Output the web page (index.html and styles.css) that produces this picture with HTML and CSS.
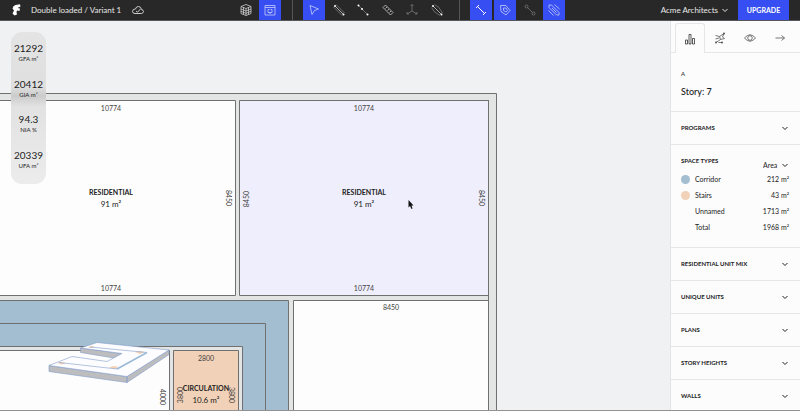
FILE: index.html
```html
<!DOCTYPE html>
<html lang="en">
<head>
<meta charset="utf-8">
<meta name="viewport" content="width=device-width, initial-scale=1">
<title>Double loaded / Variant 1</title>
<link rel="stylesheet" href="styles.css">
</head>
<body>
<svg class="defs" aria-hidden="true">
  <symbol id="chevron" viewBox="0 0 8 8"><path d="M1.500 3L4 5.500 6.500 3" fill="none" stroke="currentColor"/></symbol>
</svg>
<header class="topbar">
  <div class="brand">
    <svg class="logo" viewBox="0 0 9 12" aria-hidden="true"><path d="M.5 4.500Q1 1.500 3.500 1L8 .3 8.500 2.500 5.500 4 8 4.500 7.500 7 5 6.500 4.500 8 5 10.500 2.500 11.500 .5 9.500 2 6.500Z" fill="#fff"/></svg>
    <span>Double loaded / Variant 1</span>
    <svg class="cloud" viewBox="0 0 14 12" fill="none" stroke="#ccc" aria-hidden="true"><path d="M4 9.500H10.500Q12.500 9 12.500 7.500T10.500 5.500Q10 2.500 7.500 2.500T4.500 5Q1.500 5 1.500 7.300T4 9.500M5 7L6.500 8.200 9.500 5"/></svg>
  </div>
  <nav class="toolbar" aria-label="Tools">
    <div class="tools tools-view">
      <button class="tool" aria-label="3D view"><svg viewBox="0 0 14 14"><path d="M7 1.500L12 3.500 7 5.500 2 3.500ZM2 3.500V10.500L7 12.500 12 10.500V3.500M7 5.500V12.500M2 6L7 8 12 6M2 8.300L7 10.300 12 8.300M4.500 4.500V11.500M9.500 4.500V11.500"/></svg></button>
      <button class="tool active" aria-label="Plan view"><svg viewBox="0 0 14 14"><path d="M2 2.500H12V12H2ZM2 4.500H12M5 6.500V9.500H9V6.500M5 6.500H6.500M7.500 6.500H9M7 9.500V11"/></svg></button>
    </div>
    <span class="rule"></span>
    <div class="tools tools-draw">
      <button class="tool active" aria-label="Select"><svg viewBox="0 0 14 14"><path d="M3 2.500L11.500 6 7.500 7.500 5 11.500Z"/></svg></button>
      <button class="tool" aria-label="Wall"><svg viewBox="0 0 14 14"><path class="faint" d="M4 1.500L12.500 10M1.500 4L10 12.500"/><path d="M3 3L11 11"/><path class="dots" d="M3 3h0M11.500 11.500h0"/></svg></button>
      <button class="tool" aria-label="Line"><svg viewBox="0 0 14 14"><path class="faint" d="M2.500 2.500L11.500 11.500"/><path class="dots" d="M2.500 2.500h0M6 6h0M11.500 11.500h0"/></svg></button>
      <button class="tool" aria-label="Measure"><svg viewBox="0 0 14 14"><path d="M4.500 2L12 9.500 9.500 12 2 4.500ZM4.500 5.500L6 4M6.500 7.500L8 6M8.500 9.500L10 8"/></svg></button>
      <button class="tool dim" aria-label="Axes"><svg viewBox="0 0 14 14"><path d="M7 1.500V8L2 11M7 8L12 11M5.500 3L7 1.500 8.500 3M2 9V11H4M12 9V11H10"/></svg></button>
      <button class="tool" aria-label="Split"><svg viewBox="0 0 14 14"><path class="faint" d="M4.500 1.500Q9 3 12.500 10M1.500 4.500Q3 9 10 12.500"/><path d="M3 3L11 11"/><path class="dots" d="M3 3h0M11.500 11.500h0"/></svg></button>
    </div>
    <span class="rule"></span>
    <div class="tools tools-show">
      <button class="tool active" aria-label="Dimensions"><svg viewBox="0 0 14 14"><path class="strong" d="M3.500 3.500L10.500 10.500M2 5L5 2M9 12L12 9"/></svg></button>
      <button class="tool active" aria-label="Labels"><svg viewBox="0 0 14 14"><path d="M2.500 2.500H8L12 7.500 8 12 3 8.500ZM5.500 5H8L9.500 7.500 8 9 5.500 7.500Z"/></svg></button>
      <button class="tool dim" aria-label="Nodes"><svg viewBox="0 0 14 14"><path d="M4.500 4.500L9.500 9.500"/><circle cx="3.500" cy="3.500" r="1.500"/><circle cx="10.500" cy="10.500" r="1.500"/></svg></button>
      <button class="tool active" aria-label="Wall width"><svg viewBox="0 0 14 14"><path d="M4.500 2L12 9.500V12H9.500L2 4.500V2ZM7.500 1.500L12.500 6M1.500 7.500L6.500 12.500M5 5L9.500 9.500"/></svg></button>
    </div>
  </nav>
  <div class="account">
    <button class="org">Acme Architects <svg class="chev"><use href="#chevron"/></svg></button>
    <button class="upgrade">UPGRADE</button>
  </div>
</header>
<main class="workspace">
  <section class="canvas" aria-label="Floor plan">
    <svg class="plan" viewBox="0 21 670 389" preserveAspectRatio="xMinYMin slice">
      <g class="outline">
        <path class="wall" d="M-5 93.500H496.500V420H-5Z"/>
        <path class="room" d="M-5 100.500H235.500V295.500H-5Z"/>
        <path class="selected" d="M239.500 100.500H488.500V295.500H239.500Z"/>
        <path d="M488.500 100V420" fill="none"/>
        <path class="corridor" d="M-5 300.500H288.500V420H-5Z"/>
        <path class="corridor" d="M-5 323.500H265.500V420H-5Z"/>
        <path class="wall" d="M-5 346.500H242.500V420H-5Z"/>
        <path class="room" d="M-5 350.500H169.500V420H-5Z"/>
        <path class="stairs" d="M173.500 350.500H238.500V420H173.500Z"/>
        <path class="room" d="M293.500 300.500H488.500V420H293.500Z"/>
      </g>
      <g class="model">
        <path class="side" d="M49 365.500L127 376.500V382.500L49 371.500ZM127 376.500L169 350V354.500L127 382.500ZM80.500 348L122 353.500 114 358 80.500 352.500Z"/>
        <path class="top" d="M80.500 348L97 342.500 169 350 127 376.500 49 365.500 72 356.500 107 361.500 122 353.500Z"/>
        <path class="flight" d="M88 347.500L91 346 95 346.500 91 348ZM135 352L140 351 145 352 140 354ZM57 363L61 362 66 363 62 364.500ZM109 367.500L113 366 118 366.500 116 369Z"/>
        <path class="path-line" d="M90 347L147 352.500 117 369 59 362.500"/>
        <path class="path-wide" d="M147 352.500L117 369"/>
      </g>
      <g class="label">
        <text x="111" y="111">10774</text><text x="364" y="111">10774</text>
        <text x="111" y="291">10774</text><text x="364" y="291">10774</text>
        <text x="391" y="310">8450</text><text x="206" y="361">2800</text>
        <text transform="translate(226 198) rotate(90)">8450</text>
        <text transform="translate(249 199) rotate(-90)">8450</text>
        <text transform="translate(479 198) rotate(90)">8450</text>
        <text transform="translate(160 397) rotate(90)">4000</text>
        <text transform="translate(183 395) rotate(-90)">3800</text>
        <text transform="translate(229 395) rotate(90)">3800</text>
      </g>
      <g class="name">
        <text x="111" y="195">RESIDENTIAL</text><text x="364" y="195">RESIDENTIAL</text><text x="206" y="391">CIRCULATION</text>
      </g>
      <g class="area">
        <text x="111" y="207">91 m²</text><text x="364" y="207">91 m²</text><text x="206" y="403">10.6 m²</text>
      </g>
      <path d="M408.500 200V207.500L410 206 411.500 209 412.500 208.500 411.500 205.500H413.500Z" fill="#111"/>
    </svg>
    <dl class="metrics">
      <div><dd>21292</dd><dt>GFA m²</dt></div>
      <div><dd>20412</dd><dt>GIA m²</dt></div>
      <div><dd>94.3</dd><dt>NIA %</dt></div>
      <div><dd>20339</dd><dt>UFA m²</dt></div>
    </dl>
  </section>
  <aside class="panel">
    <div class="tabs">
      <button class="tab current" aria-label="Statistics"><svg viewBox="0 0 14 14"><path d="M2.500 8H4.500V12H2.500ZM6 2.500H8V12H6ZM9.500 6.500H11.500V12H9.500Z"/></svg></button>
      <button class="tab" aria-label="Sun"><svg viewBox="0 0 14 14"><path d="M2.500 4.500L6.500 5.500 11 2.500 9.500 6 11.500 7.500 7.500 8.500 6.500 5.500M2.500 8L6 7M3 11.500L7.500 8.500M5.500 11.500H9"/><path class="nodes" d="M3 11.500h0M11 2.500h0M9 11.500h0"/></svg></button>
      <button class="tab" aria-label="Visibility"><svg viewBox="0 0 14 14"><path d="M1.500 7Q7 .5 12.500 7 7 13.500 1.500 7Z"/><circle cx="7" cy="7" r="2.300"/></svg></button>
      <button class="tab" aria-label="Collapse"><svg viewBox="0 0 14 14"><path d="M2.500 7H11.500M8.500 4.500L11.500 7 8.500 9.500"/></svg></button>
    </div>
    <div class="intro"><p class="building">A</p><h1>Story: 7</h1></div>
    <button class="fold">PROGRAMS<svg class="chev"><use href="#chevron"/></svg></button>
    <section class="spaces">
      <div class="spaces-head">
        <h2 id="spaces-title">SPACE TYPES</h2>
        <div class="picker"><select aria-label="Measure"><option>Area</option></select><svg class="chev"><use href="#chevron"/></svg></div>
      </div>
      <table aria-labelledby="spaces-title">
        <tr><td class="key"><i class="dot blue"></i></td><th scope="row">Corridor</th><td>212 m²</td></tr>
        <tr><td class="key"><i class="dot peach"></i></td><th scope="row">Stairs</th><td>43 m²</td></tr>
        <tr><td class="key"></td><th scope="row">Unnamed</th><td>1713 m²</td></tr>
        <tr><td class="key"></td><th scope="row">Total</th><td>1968 m²</td></tr>
      </table>
    </section>
    <button class="fold">RESIDENTIAL UNIT MIX<svg class="chev"><use href="#chevron"/></svg></button>
    <button class="fold">UNIQUE UNITS<svg class="chev"><use href="#chevron"/></svg></button>
    <button class="fold">PLANS<svg class="chev"><use href="#chevron"/></svg></button>
    <button class="fold">STORY HEIGHTS<svg class="chev"><use href="#chevron"/></svg></button>
    <button class="fold">WALLS<svg class="chev"><use href="#chevron"/></svg></button>
  </aside>
</main>
</body>
</html>
```
FILE: styles.css
```css
* { box-sizing: border-box; margin: 0; padding: 0; }
body {
  display: flex;
  flex-direction: column;
  height: 100vh;
  overflow: hidden;
  border-bottom: 1px solid #929292;
  background: #f0f1f3;
  color: #222;
  font: 7px/10px Lato, "Liberation Sans", sans-serif;
}
button, select { border: 0; background: none; color: inherit; font: inherit; appearance: none; cursor: pointer; }
svg { display: block; flex: none; }
.defs { position: absolute; width: 0; height: 0; }
.chev { width: 8px; height: 8px; }

.topbar {
  display: grid;
  grid-template-columns: 1fr auto 1fr;
  flex: none;
  height: 21px;
  border-bottom: 1px solid #55565c;
  background: #282828;
  color: #e8e8e8;
  font-size: 8px;
}
.brand { display: flex; align-items: center; padding-left: 12px; white-space: nowrap; }
.logo { width: 9px; height: 12px; margin-right: 10px; }
.cloud { width: 14px; height: 12px; margin-left: 10px; }
.toolbar { display: flex; }
.tools { display: flex; justify-content: space-between; }
.tools-view { width: 46px; }
.tools-draw { width: 145px; }
.tools-show { width: 95px; }
.rule { width: 1px; margin: 0 10px 0 11px; background: #555; }
.tool { display: grid; place-items: center; width: 22px; color: #ccc; }
.tool svg { width: 14px; height: 14px; fill: none; stroke: currentColor; stroke-width: 0.8; }
.tool .faint { opacity: 0.5; }
.tool .strong { stroke: #fff; stroke-width: 1; }
.dots { stroke: #fff; stroke-width: 2; stroke-linecap: round; }
.nodes { stroke-width: 2; stroke-linecap: round; }
.tool.active { background: #374ff2; color: #c8cffc; }
.tool.dim { color: #777; }
.account { display: flex; justify-content: flex-end; padding-right: 11px; }
.org { display: flex; align-items: center; gap: 3px; margin-right: 9px; white-space: nowrap; }
.upgrade { width: 51px; background: #374ff2; color: #fff; font-size: 7px; font-weight: 700; }

.workspace { display: flex; flex: 1; min-height: 0; }
.canvas { position: relative; flex: 1; min-width: 0; overflow: hidden; }
.plan { width: 100%; height: 100%; }
.outline { stroke: #707070; }
.wall { fill: #e3e4e4; }
.room { fill: #fdfdfd; }
.selected { fill: #eeeefc; }
.corridor { fill: #a3bdd1; }
.stairs { fill: #f1d1b7; }
.model { stroke: #7f9cc9; stroke-width: 0.6; }
.side { fill: #bdbdbf; }
.top { fill: #fdfdff; }
.flight { fill: #f4d2b5; stroke: none; }
.path-line { fill: none; }
.path-wide { fill: none; stroke: #9cbbd8; stroke-width: 1.5; }
.label, .name, .area { fill: #222; text-anchor: middle; font-size: 7px; }
.label { fill: #444; }
.name { font-weight: 700; }
.area { font-size: 8px; }

.metrics {
  position: absolute;
  top: 11px;
  left: 11px;
  display: flex;
  flex-direction: column;
  justify-content: space-between;
  width: 35px;
  height: 152px;
  padding: 10px 0 13px;
  border-radius: 11px;
  background: linear-gradient(#e4e4e5, #dfdfe0 36%, #cbcbcb 42%, #e2e2e2 49%, #ececec);
  text-align: center;
}
.metrics div { display: flex; flex-direction: column; }
.metrics dd { font-size: 10px; line-height: 12px; }
.metrics dt { font-size: 6px; line-height: 10px; }

.panel { flex: none; width: 130px; overflow: hidden auto; scrollbar-width: none; border-left: 1px solid #e2e3e5; background: #fcfcfd; }
.tabs { display: flex; height: 32px; padding: 2px 0 0 4px; box-shadow: inset 0 -1px #e6e6e8; }
.tab { display: grid; place-items: center; width: 30px; color: #555; }
.tab.current { border: 1px solid #e6e6e8; border-bottom: 0; border-radius: 3px 3px 0 0; background: #fcfcfd; color: #333; }
.tab svg { width: 14px; height: 14px; fill: none; stroke: currentColor; stroke-width: 0.8; }
.intro { padding: 16px 10px 13px; border-bottom: 1px solid #e6e6e8; }
.building { font-size: 6px; line-height: 10px; }
h1 { margin-top: 6px; font-size: 9px; font-weight: 500; line-height: 13px; }
.fold {
  display: flex;
  align-items: center;
  justify-content: space-between;
  width: 100%;
  height: 33px;
  padding: 0 11px 0 10px;
  border-bottom: 1px solid #e6e6e8;
  font-size: 6px;
  font-weight: 700;
  text-align: left;
}
.spaces { padding: 8px 11px 12px 10px; border-bottom: 1px solid #e6e6e8; }
.spaces-head { display: flex; justify-content: space-between; height: 18px; }
h2 { font-size: 6px; line-height: 16px; }
.picker { display: flex; align-items: center; align-self: flex-end; gap: 3px; line-height: 12px; }
table { width: 100%; border-collapse: collapse; }
tr { height: 16px; }
th { font-weight: 400; text-align: left; }
td { text-align: right; }
.key { width: 14px; }
.dot { display: block; width: 9px; height: 9px; border-radius: 50%; }
.blue { background: #a3bdd1; }
.peach { background: #f1d1b7; }
```
